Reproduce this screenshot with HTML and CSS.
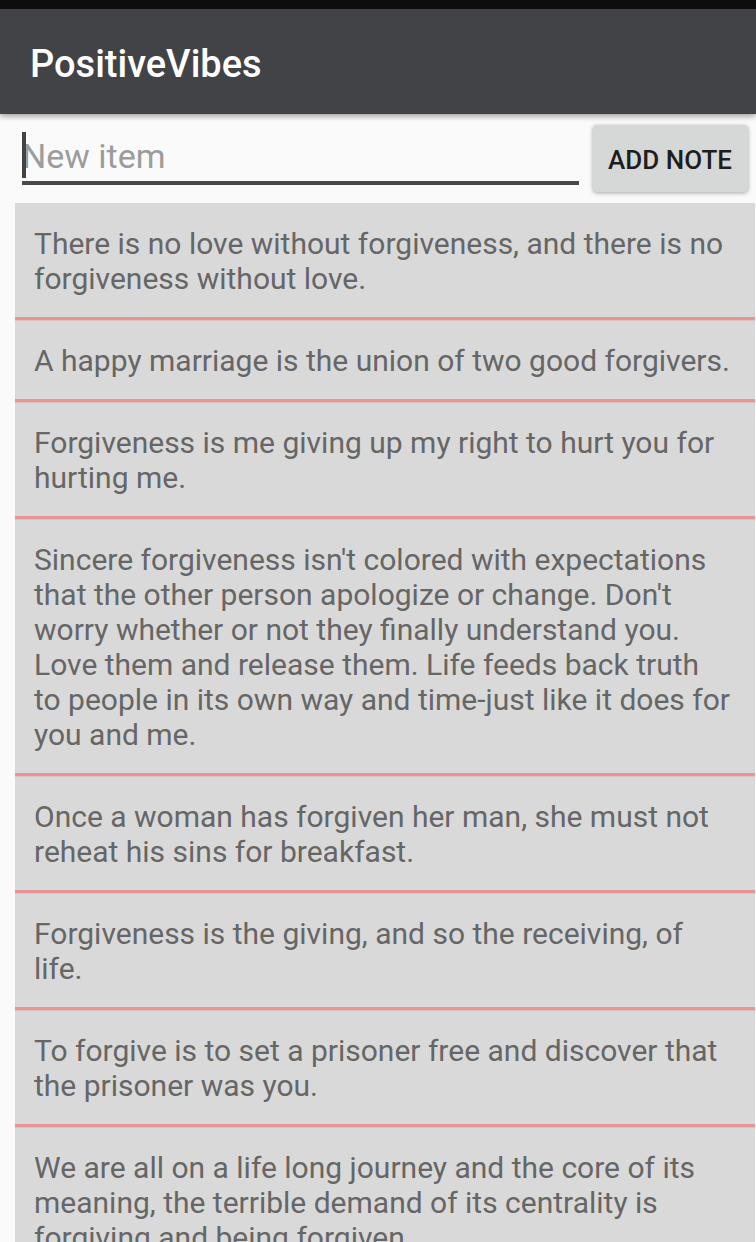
FILE: index.html
```html
<!DOCTYPE html>
<html lang="en">
<head>
<meta charset="utf-8">
<meta name="viewport" content="width=device-width, initial-scale=1">
<title>PositiveVibes</title>
<link rel="stylesheet" href="styles.css">
</head>
<body>
<div class="app">
  <header class="app-bar"><h1 class="app-title">PositiveVibes</h1></header>
  <main class="content">
    <form class="composer">
      <div class="field">
        <input class="field-input" type="text" placeholder="New item" aria-label="New item">
        <span class="caret"></span>
      </div>
      <button class="add-button" type="button">ADD NOTE</button>
    </form>
    <ul class="notes">
      <li class="note">There is no love without forgiveness, and there is no forgiveness without love.</li>
      <li class="note">A happy marriage is the union of two good forgivers.</li>
      <li class="note">Forgiveness is me giving up my right to hurt you for hurting me.</li>
      <li class="note">Sincere forgiveness isn't colored with expectations that the other person apologize or change. Don't worry whether or not they finally understand you. Love them and release them. Life feeds back truth to people in its own way and time-just like it does for you and me.</li>
      <li class="note">Once a woman has forgiven her man, she must not reheat his sins for breakfast.</li>
      <li class="note">Forgiveness is the giving, and so the receiving, of life.</li>
      <li class="note">To forgive is to set a prisoner free and discover that the prisoner was you.</li>
      <li class="note">We are all on a life long journey and the core of its meaning, the terrible demand of its centrality is forgiving and being forgiven.</li>
    </ul>
  </main>
</div>
</body>
</html>
```
FILE: styles.css
```css
* {
  box-sizing: border-box;
}

body {
  margin: 0;
  background: #fafafa;
  font-family: Roboto, "Liberation Sans", sans-serif;
}

.app {
  display: flex;
  flex-direction: column;
  height: 100vh;
  overflow: hidden;
}

.app-bar {
  flex: none;
  position: relative;
  padding: 33px 30px 28px;
  border-top: 9px solid #0d0d0d;
  background: #424347;
  box-shadow: 0 2px 6px rgba(0, 0, 0, 0.4);
}

.app-title {
  margin: 0;
  color: #fff;
  font-size: 38px;
  font-weight: 500;
  line-height: 44px;
}

.content {
  flex: 1;
  min-height: 0;
  display: flex;
  flex-direction: column;
  overflow: hidden;
}

.composer {
  flex: none;
  display: flex;
  gap: 14px;
  padding: 11px 8px 11px 22px;
}

.field {
  flex: 1;
  min-width: 0;
  position: relative;
  padding: 7px 0;
}

.field-input {
  display: block;
  width: 100%;
  height: 53px;
  padding: 0 0 2px;
  border: 0;
  border-bottom: 4px solid #4a4a4d;
  border-radius: 0;
  outline: 0;
  background: transparent;
  color: #212121;
  font-family: inherit;
  font-size: 34px;
}

.field-input::placeholder {
  color: #9c9c9c;
  opacity: 1;
}

.caret {
  position: absolute;
  top: 7px;
  left: 0;
  width: 4px;
  height: 46px;
  background: #424347;
}

.add-button {
  flex: none;
  height: 67px;
  padding: 3px 16px 0 15px;
  border: 0;
  border-radius: 4px;
  background: #d6d8d7;
  box-shadow: 0 1px 4px rgba(0, 0, 0, 0.35);
  color: #1e1e1e;
  font-family: inherit;
  font-size: 26px;
  font-weight: 500;
}

.notes {
  flex: 1;
  min-height: 0;
  margin: 0 1px 0 15px;
  padding: 0;
  overflow: hidden;
  background: #d9d9d9;
  list-style: none;
}

.note {
  padding: 23px 23px 21px 19px;
  border-bottom: 3px solid #e69595;
  box-shadow: 0 1px 0 #dfbfbf;
  color: #666;
  font-size: 30px;
  line-height: 35px;
}
```
